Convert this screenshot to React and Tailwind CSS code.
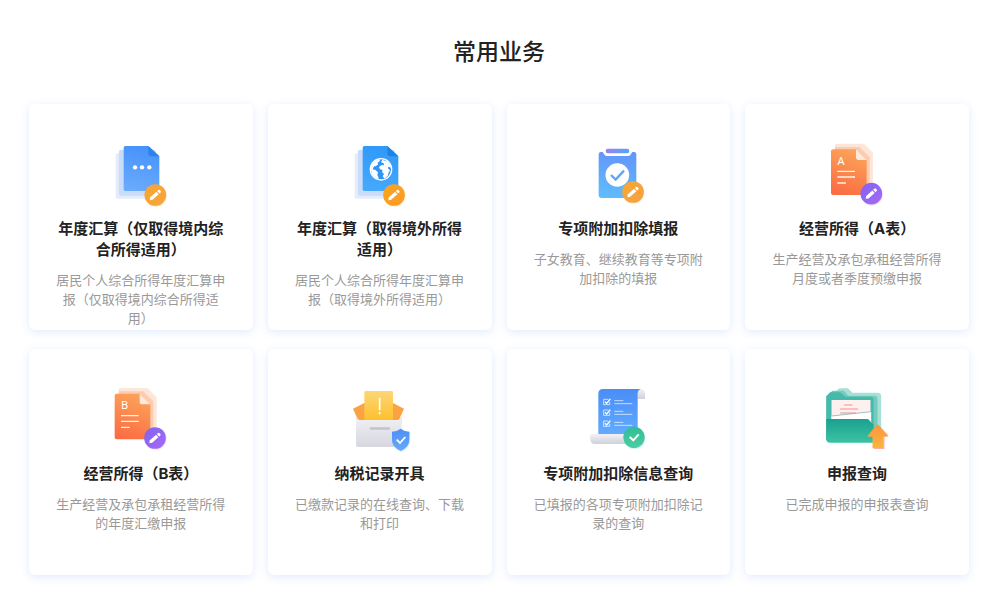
import clsx from 'clsx'

// Small round badge with a pencil, sits on the lower right of an icon
function PencilBadge({ cx, cy, id, from, to }) {
  return (
    <g>
      <defs>
        <linearGradient id={id} x1="0" y1="0" x2="1" y2="1">
          <stop offset="0" stopColor={from}/>
          <stop offset="1" stopColor={to}/>
        </linearGradient>
      </defs>
      <circle cx={cx+2} cy={cy+3} r="33" fill={to} opacity="0.15"/>
      <circle cx={cx} cy={cy} r="32.5" fill={`url(#${id})`}/>
      <g transform={`translate(${cx} ${cy}) rotate(-42)`} fill="#fff">
        <path d="M-23 0 L-16 -5 H9 V5 H-16 Z"/>
        <path d="M12 -5 H17 Q20 -5 20 -1.5 V1.5 Q20 5 17 5 H12 Z"/>
      </g>
    </g>
  )
}

function Icon({ minX, children }) {
  return (
    <svg viewBox={`${minX} 0 225 225`} className="size-[75px] shrink-0" aria-hidden="true">
      {children}
    </svg>
  )
}

function BlueSheet({ id, from, to, fold }) {
  return (
    <>
      <defs>
        <linearGradient id={id} x1="0.6" y1="0" x2="0.4" y2="1">
          <stop offset="0" stopColor={from}/>
          <stop offset="1" stopColor={to}/>
        </linearGradient>
      </defs>
      <rect x="33" y="55" width="108" height="136" rx="5" fill="#e4ecfb"/>
      <rect x="43" y="44" width="110" height="138" rx="5" fill="#c9dcfa"/>
      <path d="M62 33 H131 L164 64 V163 Q164 168 159 168 H62 Q57 168 57 163 V38 Q57 33 62 33 Z" fill={`url(#${id})`}/>
      <path d="M131 33 L164 64 H140 Q131 64 131 55 Z" fill={fold}/>
    </>
  )
}

function DomesticIcon() {
  return (
    <Icon minX={-5}>
      <BlueSheet id="sheetA" from="#4592fb" to="#6aaafb" fold="#2f83e6"/>
      <circle cx="91" cy="97" r="6.5" fill="#fff"/>
      <circle cx="112" cy="97" r="6.5" fill="#fff"/>
      <circle cx="134" cy="97" r="6.5" fill="#fff"/>
      <PencilBadge cx={152} cy={180} id="penA" from="#f7a62e" to="#f8a43e"/>
    </Icon>
  )
}

function OverseasIcon() {
  return (
    <Icon minX={-5}>
      <BlueSheet id="sheetB" from="#2f98f9" to="#45a9fb" fold="#1e84e4"/>
      <circle cx="112" cy="103" r="32" fill="#2f95f5" stroke="#fff" strokeWidth="4"/>
      <path d="M82 97 Q86 80 102 74 L109 73 L108 79 L101 83 L104 88 L96 94 L91 94 L87 103 L95 105 L103 112 L101 120 L106 131 L99 131 Q84 124 82 103 Z" fill="#fff"/>
      <path d="M116 75 L131 79 Q141 88 142 98 L135 95 L132 99 L139 106 L135 113 L132 123 L122 131 L117 124 L121 117 L115 111 L117 105 L109 103 L106 96 L114 90 L122 91 L119 84 L112 82 Z" fill="#fff"/>
      <PencilBadge cx={151} cy={180} id="penB" from="#fba41f" to="#fb9c25"/>
    </Icon>
  )
}

function DeductionIcon() {
  return (
    <Icon minX={-12}>
      <defs>
        <linearGradient id="board" x1="0.5" y1="0" x2="0.4" y2="1">
          <stop offset="0" stopColor="#6495fb"/>
          <stop offset="1" stopColor="#5fbdfb"/>
        </linearGradient>
        <linearGradient id="clip" x1="0" y1="0" x2="1" y2="0">
          <stop offset="0" stopColor="#9b80ef"/>
          <stop offset="1" stopColor="#55a5fa"/>
        </linearGradient>
      </defs>
      <path d="M41 58 Q41 51 48 51 H53 L59 60 Q61 63 65 63 H130 Q134 63 136 60 L142 51 H147 Q154 51 154 58 V180 Q154 189 145 189 H50 Q41 189 41 180 Z" fill="url(#board)"/>
      <rect x="62" y="41" width="71" height="14" rx="7" fill="url(#clip)"/>
      <circle cx="97" cy="120" r="35.5" fill="#fff"/>
      <path d="M78 120 L92 134 L117 107" fill="none" stroke="#5ba7fa" strokeWidth="7"/>
      <PencilBadge cx={144} cy={171} id="penC" from="#f6a833" to="#f7a043"/>
    </Icon>
  )
}

function FormIcon({ letter, minX, dx, dy }) {
  const id = `form${letter}`
  return (
    <Icon minX={minX}>
      <defs>
        <linearGradient id={id} x1="0.7" y1="0" x2="0.4" y2="1">
          <stop offset="0" stopColor="#fba55b"/>
          <stop offset="1" stopColor="#fb6e43"/>
        </linearGradient>
      </defs>
      <g transform={`translate(${dx} ${dy})`}>
        <path d="M56 26 H133 L160 52 V166 H56 Z" fill="#fdebdf"/>
        <path d="M46 35 V30 Q46 27 50 27 H127 L159 58 V166 H46 Z" fill="#fde6d8"/>
        <path d="M46 36 H119 L150 66 V172 H46 Z" fill="#fccbb0"/>
        <path d="M40 43 H109 L141 75 V174 Q141 180 135 180 H40 Q34 180 34 174 V49 Q34 43 40 43 Z" fill={`url(#${id})`}/>
        <path d="M109 43 L141 75 H117 Q109 75 109 67 Z" fill="#fee9dc"/>
        <text x="64" y="90" textAnchor="middle" fontSize="33" className="font-['Noto_Sans']" fill="#fff">{letter}</text>
        <path d="M53 109 H106 M53 126 H106 M53 144 H79" stroke="#fff" strokeWidth="4" opacity="0.9"/>
        <PencilBadge cx={155} cy={176} id={`pen${letter}form`} from="#7f63ee" to="#a869fa"/>
      </g>
    </Icon>
  )
}

function TaxRecordIcon() {
  return (
    <Icon minX={-5}>
      <defs>
        <linearGradient id="slip" x1="0" y1="0" x2="0" y2="1">
          <stop offset="0" stopColor="#fdd676"/>
          <stop offset="1" stopColor="#fdc02c"/>
        </linearGradient>
        <linearGradient id="box" x1="0" y1="0" x2="0" y2="1">
          <stop offset="0" stopColor="#f0f0f4"/>
          <stop offset="1" stopColor="#d6d7df"/>
        </linearGradient>
        <linearGradient id="shield" x1="0" y1="0" x2="0" y2="1">
          <stop offset="0" stopColor="#4e8ef8"/>
          <stop offset="1" stopColor="#66abfc"/>
        </linearGradient>
      </defs>
      <path d="M62 69 L28 86 L43 120 H166 L181 86 L148 69 Z" fill="#fba343"/>
      <path d="M37 111 L47 120 H163 L174 111 V130 H37 Z" fill="#c9cbd4"/>
      <rect x="62" y="33" width="86" height="90" rx="4" fill="url(#slip)"/>
      <path d="M108 53 V91 M108 96 V103" stroke="#fff" strokeWidth="5"/>
      <path d="M37 111 L45 120 H165 L174 111 V195 Q174 201 168 201 H43 Q37 201 37 195 Z" fill="url(#box)"/>
      <rect x="78" y="142" width="61" height="7" rx="3" fill="#c2c3cb"/>
      <path d="M174 149 Q185 157 200 157 V182 Q200 204 174 216 Q145 204 145 182 V157 Q162 157 174 149 Z" fill="#5b93f0" opacity="0.18"/>
      <path d="M171 146 Q182 155 197 155 V180 Q197 202 171 213 Q145 202 145 180 V155 Q160 155 171 146 Z" fill="url(#shield)"/>
      <path d="M159 179 L169 189 L185 171" fill="none" stroke="#fff" strokeWidth="5.5"/>
    </Icon>
  )
}

function DeductionQueryIcon() {
  return (
    <Icon minX={3}>
      <defs>
        <linearGradient id="scroll" x1="0" y1="0" x2="0" y2="1">
          <stop offset="0" stopColor="#4a8df8"/>
          <stop offset="1" stopColor="#62abfd"/>
        </linearGradient>
        <linearGradient id="roll" x1="0" y1="0" x2="0" y2="1">
          <stop offset="0" stopColor="#f2f2f6"/>
          <stop offset="1" stopColor="#cfd0d9"/>
        </linearGradient>
        <linearGradient id="done" x1="0" y1="0" x2="0" y2="1">
          <stop offset="0" stopColor="#31bd93"/>
          <stop offset="1" stopColor="#4ccda5"/>
        </linearGradient>
      </defs>
      <path d="M164 27 H180 Q195 27 195 43 V57 H172 V38 Z" fill="url(#roll)"/>
      <path d="M69 27 H182 Q173 30 173 42 V164 H55 V42 Q55 27 69 27 Z" fill="url(#scroll)"/>
      <path d="M31 162 H146 V192 H45 Q31 192 31 178 Z" fill="url(#roll)"/>
      {[66, 98, 131].map(y => (
        <g key={y} fill="none" stroke="#fff">
          <path d={`M85 ${y-8} H71 V${y+8} H89 V${y}`} strokeWidth="2.5" opacity="0.85"/>
          <path d={`M75 ${y-1} L80 ${y+4} L91 ${y-9}`} strokeWidth="4"/>
          <path d={`M103 ${y-4} H130 M103 ${y+5} H157`} strokeWidth="2.5" opacity="0.8"/>
        </g>
      ))}
      <circle cx="164" cy="176" r="32" fill="#49c9a0" opacity="0.18"/>
      <circle cx="162" cy="172" r="32" fill="url(#done)"/>
      <path d="M149 171 L160 181 L176 163" fill="none" stroke="#fff" strokeWidth="6"/>
    </Icon>
  )
}

function DeclareQueryIcon() {
  return (
    <Icon minX={5.5}>
      <defs>
        <linearGradient id="folder" x1="0" y1="0" x2="0" y2="1">
          <stop offset="0" stopColor="#1ba08f"/>
          <stop offset="1" stopColor="#3bc3a4"/>
        </linearGradient>
        <linearGradient id="arrow" x1="0" y1="0" x2="0" y2="1">
          <stop offset="0" stopColor="#fa963f"/>
          <stop offset="1" stopColor="#fbb53d"/>
        </linearGradient>
      </defs>
      <path d="M50 38 L63 25 H89 L103 38 H178 Q189 38 189 49 V170 Q189 178 180 178 H50 Z" fill="#a8e0d7"/>
      <path d="M36 38 L43 32 H77 L90 47 H168 Q178 47 178 57 V184 H34 Z" fill="#73cbbd"/>
      <path d="M24 49 L36 37 H66 L82 50 H158 Q166 50 166 58 V180 H24 Z" fill="#45b9aa"/>
      <path d="M40 60 H157 V118 H40 Z" fill="#fff0f0"/>
      <path d="M78 75 H103 M66 87 H120 M66 99 H113" stroke="#ef8f8f" strokeWidth="3"/>
      <path d="M40 108 L160 95 V134 H40 Z" fill="#fff"/>
      <path d="M40 108 L160 95 V126" fill="none" stroke="#69aaa7" strokeWidth="2"/>
      <path d="M24 117 H147 Q152 117 155 122 L163 131 H166 V188 H36 Q24 188 24 177 Z" fill="url(#folder)"/>
      <path d="M181 134 L212 167 H199 V207 H167 V171 Z" fill="#f5617f" opacity="0.5"/>
      <path d="M178 133 L209 168 Q210 170 207 170 H195 V205 H163 V170 H150 Q146 170 149 167 L175 134 Q177 132 178 133 Z" fill="url(#arrow)"/>
    </Icon>
  )
}

const services = [
  { icon: <DomesticIcon/>, name: '年度汇算（仅取得境内综合所得适用）', desc: '居民个人综合所得年度汇算申报（仅取得境内综合所得适用）' },
  { icon: <OverseasIcon/>, name: '年度汇算（取得境外所得适用）', desc: '居民个人综合所得年度汇算申报（取得境外所得适用）' },
  { icon: <DeductionIcon/>, name: '专项附加扣除填报', desc: '子女教育、继续教育等专项附加扣除的填报' },
  { icon: <FormIcon letter="A" minX={1} dx={0} dy={0}/>, name: '经营所得（A表）', desc: '生产经营及承包承租经营所得月度或者季度预缴申报' },
  { icon: <FormIcon letter="B" minX={-5} dx={-4} dy={-2}/>, name: '经营所得（B表）', desc: '生产经营及承包承租经营所得的年度汇缴申报' },
  { icon: <TaxRecordIcon/>, name: '纳税记录开具', desc: '已缴款记录的在线查询、下载和打印' },
  { icon: <DeductionQueryIcon/>, name: '专项附加扣除信息查询', desc: '已填报的各项专项附加扣除记录的查询' },
  { icon: <DeclareQueryIcon/>, name: '申报查询', desc: '已完成申报的申报表查询' },
]

function ServiceCard({ icon, name, desc }) {
  return (
    <a href="#" className={clsx(
      'flex min-h-[226px] flex-col items-center rounded-md bg-white px-[26px] pt-[31px] text-center',
      'shadow-[0_2px_10px_rgba(70,125,255,0.16)] hover:shadow-[0_4px_16px_rgba(70,125,255,0.25)]'
    )}>
      {icon}
      <h2 className="mt-2 text-[15px] leading-[21px] font-bold text-[#222]">{name}</h2>
      <p className="mt-[11px] text-[13px] leading-[19px] text-[#999]">{desc}</p>
    </a>
  )
}

export default function App() {
  return (
    <main lang="zh-CN" className="bg-white pt-9 pr-[31px] pb-8 pl-[29px] font-[Inter,'Noto_Sans_CJK_SC',sans-serif]">
      <h1 className="mb-9 text-center text-[23px] leading-8 font-medium text-[#222]">常用业务</h1>
      <div className="grid grid-cols-4 gap-x-[15px] gap-y-[19px]">
        {services.map(s => <ServiceCard key={s.name} {...s}/>)}
      </div>
    </main>
  )
}
